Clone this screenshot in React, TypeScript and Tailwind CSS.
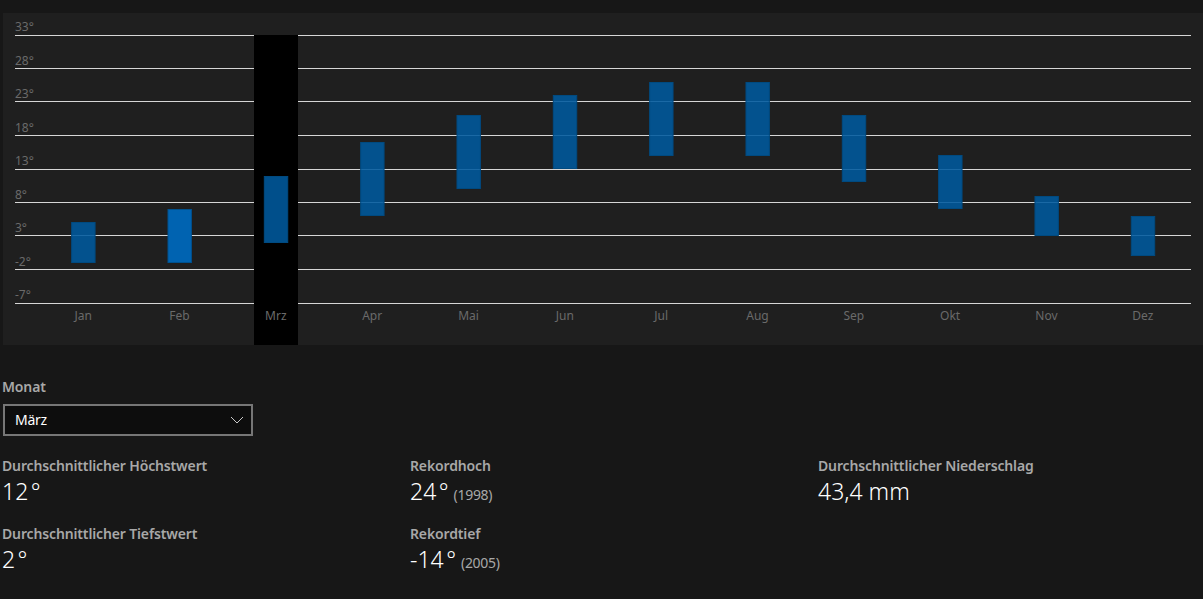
const months = [
  { m: "Jan", t: 222, b: 263 },
  { m: "Feb", t: 209, b: 263, hover: true },
  { m: "Mrz", t: 176, b: 243, sel: true },
  { m: "Apr", t: 142, b: 216 },
  { m: "Mai", t: 115, b: 189 },
  { m: "Jun", t: 95, b: 169 },
  { m: "Jul", t: 82, b: 156 },
  { m: "Aug", t: 82, b: 156 },
  { m: "Sep", t: 115, b: 182 },
  { m: "Okt", t: 155, b: 209 },
  { m: "Nov", t: 196, b: 236 },
  { m: "Dez", t: 216, b: 256 },
];
const grid = [
  { l: "33°", y: 35, o: 4 },
  { l: "28°", y: 68, o: 3 },
  { l: "23°", y: 101, o: 3 },
  { l: "18°", y: 135, o: 3 },
  { l: "13°", y: 169, o: 4 },
  { l: "8°", y: 202, o: 3 },
  { l: "3°", y: 235, o: 3 },
  { l: "-2°", y: 269, o: 3 },
  { l: "-7°", y: 303, o: 4 },
];
const OY = 13;
const font = '"Noto Sans", "Open Sans", sans-serif';

function Chart() {
  return (
    <svg width="1200" height="332" className="block" style={{ fontFamily: font }}>
      {grid.map((g) => (
        <g key={g.l}>
          <line x1="12" x2="1188" y1={g.y - OY + 0.5} y2={g.y - OY + 0.5} stroke="#d6d6d6" strokeWidth="1" />
          <text x="12" y={g.y - OY - g.o} fontSize="12" fill="#6a6a6a">{g.l}</text>
        </g>
      ))}
      <rect x="251" y={35 - OY} width="44" height={345 - 35} fill="#000000" />
      {months.map((d, i) => {
        const cx = 32 + 96.33 * i + 48.17;
        return (
          <g key={d.m}>
            <rect
              x={cx - 11.5}
              y={d.t - OY + 0.5}
              width="23.4"
              height={d.b - d.t - 1}
              fill={d.hover ? "#0063b1" : "#005a9e"}
              fillOpacity={d.hover ? 1 : 0.88}
              stroke={d.hover ? "#00528f" : "#004a80"}
              strokeWidth="1"
            />
            <text x={cx} y={307 - OY + 13} fontSize="12" fill="#6a6a6a" textAnchor="middle">{d.m}</text>
          </g>
        );
      })}
    </svg>
  );
}

function Stat({ label, value, note, tight }: { label: string; value: string; note?: string; tight?: boolean }) {
  return (
    <div className="h-[68px]">
      <div className="h-[22px] text-[14px] leading-[22px] font-semibold text-[#a8a8a8] tracking-[-0.14px]">{label}</div>
      <div className="-mt-[1px] h-[30px] leading-[30px] whitespace-nowrap text-white">
        <span className={tight ? "text-[23px] font-light [word-spacing:-3.5px]" : "text-[23px] font-light"}>{value}</span>
        {note && <span className="ml-[5px] text-[14px] tracking-[-0.3px] text-[#a8a8a8]">{note}</span>}
      </div>
    </div>
  );
}

export default function App() {
  return (
    <div className="h-[599px] w-[1203px] overflow-hidden bg-[#171717]" style={{ fontFamily: font }}>
      <div className="pt-[13px] pl-[3px]">
        <div className="h-[332px] w-[1200px] bg-[#1f1f1f]">
          <Chart />
        </div>
      </div>
      <div className="pl-[2px]">
        <div className="mt-[31px] h-[22px] text-[14px] leading-[22px] font-semibold text-[#a8a8a8] tracking-[-0.14px]">Monat</div>
        <div className="mt-[6px] ml-px flex h-[32px] w-[250px] items-center justify-between border-2 border-[#767676] bg-[#0d0d0d] pr-[7px] pl-[10px] text-[14px] text-white">
          <span className="-mt-[2px] tracking-[-0.3px]">März</span>
          <svg width="14" height="14" viewBox="0 0 14 14" fill="none" stroke="#c8c8c8" strokeWidth="1" className="-mt-px">
            <path d="M1 4 L7 10 L13 4" />
          </svg>
        </div>
        <div className="mt-[19px] grid w-[1224px] grid-cols-3">
          <div>
            <Stat tight label="Durchschnittlicher Höchstwert" value="12 °" />
            <Stat tight label="Durchschnittlicher Tiefstwert" value="2 °" />
          </div>
          <div>
            <Stat tight label="Rekordhoch" value="24 °" note="(1998)" />
            <Stat tight label="Rekordtief" value="-14 °" note="(2005)" />
          </div>
          <div>
            <Stat label="Durchschnittlicher Niederschlag" value="43,4 mm" />
          </div>
        </div>
      </div>
    </div>
  );
}
